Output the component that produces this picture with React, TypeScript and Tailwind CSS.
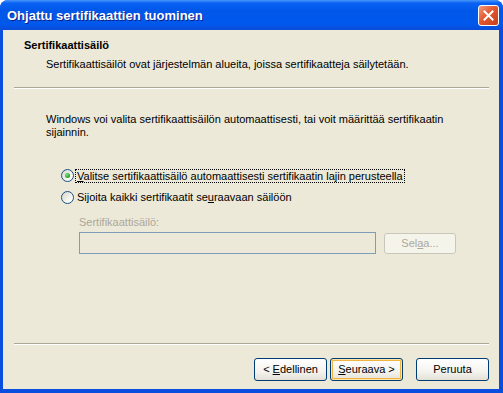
import React from 'react';

const font = "font-['Liberation_Sans',Arial,sans-serif]";

const Radio: React.FC<{ checked?: boolean }> = ({ checked }) => (
    <div className="w-[13px] h-[13px] rounded-full border border-[#1c5180] bg-[linear-gradient(135deg,#d6d5cc_0%,#f4f4f0_60%,#ffffff_100%)] flex items-center justify-center shrink-0">
        {checked && (
            <div className="w-[5px] h-[5px] rounded-full bg-[radial-gradient(circle_at_35%_35%,#7fe07f,#21a121_70%)]" />
        )}
    </div>
);

const Button: React.FC<{ children: React.ReactNode; def?: boolean }> = ({ children, def }) => (
    <div
        className={`w-[73px] h-[23px] rounded-[3px] border border-[#003c74] bg-[linear-gradient(180deg,#ffffff_0%,#f4f3ee_60%,#e3e1d6_100%)] flex items-center justify-center text-[11px] text-black ${
            def ? 'shadow-[inset_0_0_0_1px_#ffe6a8,inset_0_0_0_2px_#f0b440]' : ''
        }`}
    >
        <span className="whitespace-pre">{children}</span>
    </div>
);

const Separator: React.FC<{ className?: string }> = ({ className }) => (
    <div className={`h-[2px] border-t border-[#aca899] border-b border-b-white ml-[11px] mr-[10px] ${className ?? ''}`} />
);

const App: React.FC = () => {
    return (
        <div className={`w-[503px] h-[393px] bg-white ${font}`}>
            <div className="w-full h-full flex flex-col rounded-t-[8px] bg-[#0a4ee0]">
                {/* title bar */}
                <div className="h-[30px] shrink-0 rounded-t-[8px] bg-[linear-gradient(180deg,#4a98fa_0%,#0a62f4_10%,#0057e8_35%,#0059ec_80%,#0a4bd8_100%)] flex items-center pl-[7px] pr-[4px]">
                    <span className="text-white font-bold text-[13px] leading-[13px] [text-shadow:1px_1px_0_#0b1f8c] mt-[1px]">
                        Ohjattu sertifikaattien tuominen
                    </span>
                    <div className="ml-auto w-[21px] h-[21px] rounded-[3px] border border-white bg-[linear-gradient(135deg,#f29a7c_0%,#e2582f_45%,#c7401a_100%)] flex items-center justify-center">
                        <svg width="11" height="11" viewBox="0 0 11 11">
                            <path d="M1.5 1.5 L9.5 9.5 M9.5 1.5 L1.5 9.5" stroke="white" strokeWidth="2" strokeLinecap="square" />
                        </svg>
                    </div>
                </div>

                {/* body */}
                <div className="flex-1 ml-[3px] mr-[4px] mb-[4px] bg-[#ece9d8] flex flex-col text-[11px] leading-[13px] text-black">
                    <div className="pl-[21px] pt-[9px]">
                        <div className="font-bold">Sertifikaattisäilö</div>
                        <div className="mt-[6px] pl-[22px]">
                            Sertifikaattisäilöt ovat järjestelmän alueita, joissa sertifikaatteja säilytetään.
                        </div>
                    </div>
                    <Separator className="mt-[16px]" />

                    <div className="pl-[43px] mt-[24px]">
                        <p>
                            Windows voi valita sertifikaattisäilön automaattisesti, tai voit määrittää sertifikaatin
                            <br />
                            sijainnin.
                        </p>

                        <div className="pl-[15px] mt-[30px] flex flex-col gap-[9px]">
                            <div className="flex items-center h-[13px]">
                                <Radio checked />
                                <span className="ml-[1px] px-[1px] border border-dotted border-black leading-[12px]">
                                    <u>V</u>alitse sertifikaattisäilö automaattisesti sertifikaatin lajin perusteella
                                </span>
                            </div>
                            <div className="flex items-center h-[13px]">
                                <Radio />
                                <span className="ml-[3px]">
                                    Sijoita kaikki sertifikaatit se<u>u</u>raavaan säilöön
                                </span>
                            </div>
                        </div>

                        <div className="pl-[33px] mt-[12px]">
                            <div className="text-[#aca899]">Sertifikaattisäilö:</div>
                            <div className="flex items-start gap-[8px] mt-[3px]">
                                <div className="w-[297px] h-[22px] border border-[#7f9db9] bg-[#ece9d8]" />
                                <div className="w-[72px] h-[21px] mt-[1px] rounded-[3px] border border-[#c9c7ba] bg-[#f5f4ea] flex items-center justify-center text-[#aca899]">
                                    <span>
                                        Sel<u>a</u>a...
                                    </span>
                                </div>
                            </div>
                        </div>
                    </div>

                    <Separator className="mt-auto" />
                    <div className="flex justify-end pr-[10px] mt-[13px] mb-[8px]">
                        <Button>
                            {'< '}
                            <u>E</u>dellinen
                        </Button>
                        <div className="w-[3px]" />
                        <Button def>
                            <u>S</u>
                            {'euraava >'}
                        </Button>
                        <div className="w-[13px]" />
                        <Button>Peruuta</Button>
                    </div>
                </div>
            </div>
        </div>
    );
};

export default App;
